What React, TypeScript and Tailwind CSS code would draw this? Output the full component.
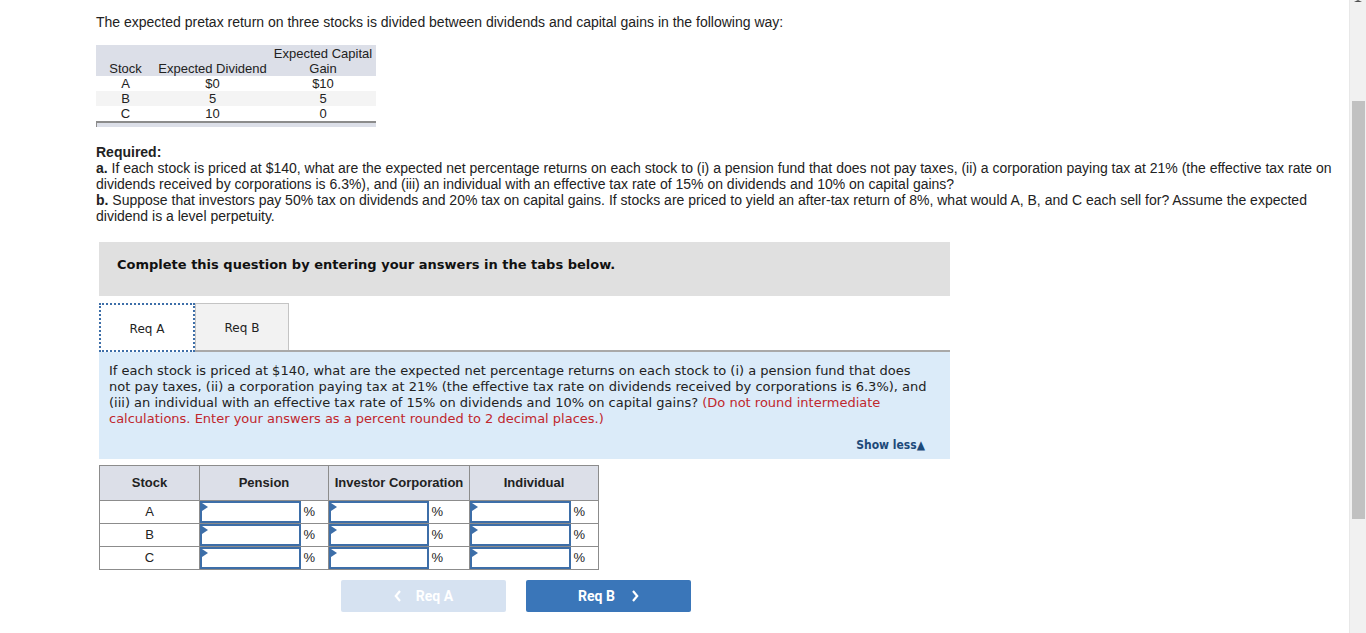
import React from 'react';

const rows = [
  { s: 'A', d: '$0', g: '$10' },
  { s: 'B', d: '5', g: '5' },
  { s: 'C', d: '10', g: '0' },
];

function AnswerInput() {
  return (
    <div className="relative h-[22px] w-full border-2 border-[#3d6ea8] bg-white">
      <span className="absolute left-0 top-0 h-0 w-0 border-y-[4px] border-l-[6px] border-y-transparent border-l-[#3d6ea8]" />
    </div>
  );
}

export default function App() {
  return (
    <div className="flex h-[633px] w-[1366px] overflow-hidden bg-white">
      <div className="flex-1 pl-[96px] pt-[13px] font-['Liberation_Sans',Arial,sans-serif] text-[#222]">
        <p className="text-[14px] leading-[18px]">
          The expected pretax return on three stocks is divided between dividends and capital gains in the following way:
        </p>

        {/* given data table */}
        <table className="mt-[14px] w-[280px] border-collapse text-[13px] leading-[15px] text-[#222]">
          <thead>
            <tr className="bg-[#dcdfe8]">
              <th className="w-[59px] align-bottom font-normal">Stock</th>
              <th className="w-[115px] align-bottom font-normal">Expected Dividend</th>
              <th className="w-[106px] pt-[1px] align-bottom font-normal">
                Expected Capital
                <br />
                Gain
              </th>
            </tr>
          </thead>
          <tbody>
            {rows.map((r, i) => (
              <tr key={r.s} className={i === 1 ? 'bg-[#f4f4f4]' : ''}>
                <td className="text-center">{r.s}</td>
                <td className="text-center">{r.d}</td>
                <td className="text-center">{r.g}</td>
              </tr>
            ))}
          </tbody>
        </table>
        <div className="h-[6px] w-[280px] border-l border-t-2 border-[#8c8c8c] bg-[#dcdfe8]" />

        <div className="mt-[17px] pr-[14px] text-[14px] leading-[16px]">
          <p className="font-bold">Required:</p>
          <p>
            <b>a.</b> If each stock is priced at $140, what are the expected net percentage returns on each stock to (i) a pension fund that does not pay taxes, (ii) a corporation paying tax at 21% (the effective tax rate on dividends received by corporations is 6.3%), and (iii) an individual with an effective tax rate of 15% on dividends and 10% on capital gains?
          </p>
          <p>
            <b>b.</b> Suppose that investors pay 50% tax on dividends and 20% tax on capital gains. If stocks are priced to yield an after-tax return of 8%, what would A, B, and C each sell for? Assume the expected dividend is a level perpetuity.
          </p>
        </div>

        <div className="ml-[3px] mt-[18px] w-[851px]">
          <div className="flex h-[54px] items-start bg-[#e0e0e0] pl-[18px] pt-[13px] font-['DejaVu_Sans',Verdana,sans-serif] text-[13px] font-bold text-[#111]">
            Complete this question by entering your answers in the tabs below.
          </div>

          {/* tabs */}
          <div className="mt-[7px] flex border-b-2 border-[#a9a9a9] font-['DejaVu_Sans',Verdana,sans-serif] text-[12px] text-[#222]">
            <div className="-mb-[2px] flex h-[49px] w-[96px] items-center justify-center border-2 border-dotted border-[#3d6ea8] bg-white pt-[2px]">
              Req A
            </div>
            <div className="flex h-[47px] w-[94px] items-center justify-center border border-b-0 border-[#c4c4c4] bg-[#f2f2f2] pt-[2px]">
              Req B
            </div>
          </div>

          <div className="h-[107px] bg-[#dbebf9] px-[10px] pt-[11px] font-['DejaVu_Sans',Verdana,sans-serif] text-[13px] leading-[16px] text-[#222]">
            <p className="pr-[6px]">
              If each stock is priced at $140, what are the expected net percentage returns on each stock to (i) a pension fund that does not pay taxes, (ii) a corporation paying tax at 21% (the effective tax rate on dividends received by corporations is 6.3%), and (iii) an individual with an effective tax rate of 15% on dividends and 10% on capital gains?{' '}
              <span className="text-[#c0272d]">
                (Do not round intermediate calculations. Enter your answers as a percent rounded to 2 decimal places.)
              </span>
            </p>
            <div className="mt-[10px] flex justify-end pr-[15px] font-['DejaVu_Sans_Condensed','DejaVu_Sans',sans-serif] text-[12px] font-bold text-[#1d4a7a]">
              Show less▲
            </div>
          </div>
        </div>

        {/* answer table */}
        <table className="ml-[3px] mt-[6px] border-collapse text-[13px] text-[#222]">
          <thead>
            <tr className="h-[35px] bg-[#dcdfe8]">
              <th className="w-[100px] border border-[#8c8c8c] font-bold">Stock</th>
              <th colSpan={2} className="w-[129px] border border-[#8c8c8c] font-bold">Pension</th>
              <th colSpan={2} className="w-[141px] border border-[#8c8c8c] font-bold">Investor Corporation</th>
              <th colSpan={2} className="w-[129px] border border-[#8c8c8c] font-bold">Individual</th>
            </tr>
          </thead>
          <tbody>
            {rows.map((r) => (
              <tr key={r.s} className="h-[23px]">
                <td className="border border-[#8c8c8c] text-center">{r.s}</td>
                <td className="w-[101px] border-y border-l border-[#8c8c8c] p-0">
                  <AnswerInput />
                </td>
                <td className="w-[28px] border-y border-r border-[#8c8c8c] pl-[3px] text-left">%</td>
                <td className="w-[100px] border-y border-l border-[#8c8c8c] p-0">
                  <AnswerInput />
                </td>
                <td className="w-[41px] border-y border-r border-[#8c8c8c] pl-[3px] text-left">%</td>
                <td className="w-[101px] border-y border-l border-[#8c8c8c] p-0">
                  <AnswerInput />
                </td>
                <td className="w-[28px] border-y border-r border-[#8c8c8c] pl-[3px] text-left">%</td>
              </tr>
            ))}
          </tbody>
        </table>

        <div className="ml-[245px] mt-[10px] flex gap-[20px] font-['Roboto','Liberation_Sans',sans-serif] text-[14px] font-bold text-white">
          <div className="flex h-[32px] w-[165px] items-center justify-center gap-[14px] rounded-[2px] bg-[#d6e2f1]">
            <svg width="8" height="12" viewBox="0 0 8 12" fill="none" stroke="white" strokeWidth="2.2">
              <path d="M6 1L1.8 6L6 11" />
            </svg>
            <span>Req A</span>
          </div>
          <div className="flex h-[32px] w-[165px] items-center justify-center gap-[16px] rounded-[2px] bg-[#3a76b9]">
            <span>Req B</span>
            <svg width="8" height="12" viewBox="0 0 8 12" fill="none" stroke="white" strokeWidth="2.2">
              <path d="M2 1L6.2 6L2 11" />
            </svg>
          </div>
        </div>
      </div>

      {/* scrollbar */}
      <div className="flex h-full w-[17px] flex-col items-center border-l border-[#e8e8e8] bg-[#f1f1f1]">
        <div className="h-0 w-0 border-x-[4px] border-b-[2px] border-x-transparent border-b-[#505050]" />
        <div className="mt-[99px] h-[418px] w-[13px] bg-[#c1c1c1]" />
      </div>
    </div>
  );
}
